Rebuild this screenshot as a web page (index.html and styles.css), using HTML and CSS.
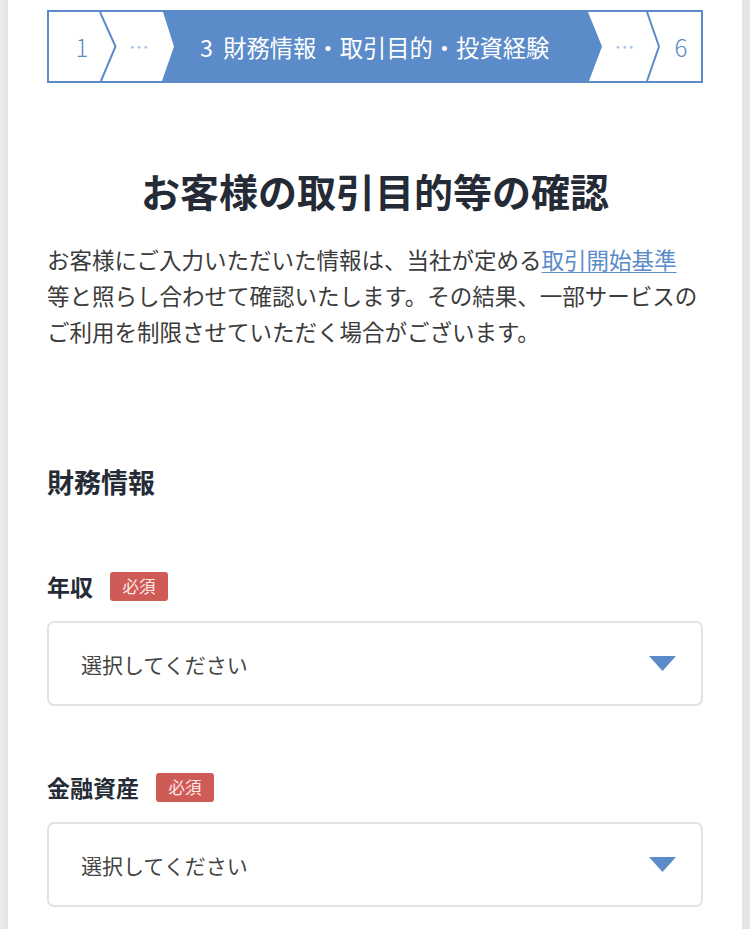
FILE: index.html
```html
<!DOCTYPE html>
<html lang="ja">
<head>
<meta charset="utf-8">
<title>お客様の取引目的等の確認</title>
<link rel="stylesheet" href="styles.css">
</head>
<body>
<div class="page">
  <nav class="stepper" aria-label="進捗">
    <svg class="stepper-bg" viewBox="0 0 652 69" preserveAspectRatio="none" aria-hidden="true">
      <polygon points="114,0 125,34.5 113,69 540,69 553,34.5 539,0" fill="#5b8bc8"/>
      <polyline points="51,0 66.5,34.5 52,69" fill="none" stroke="#5b8bc8" stroke-width="2"/>
      <polyline points="598,0 610,34.5 598,69" fill="none" stroke="#5b8bc8" stroke-width="2"/>
    </svg>
    <ol class="steps">
      <li class="step step-first">1</li>
      <li class="step step-dots">…</li>
      <li class="step step-active">3 財務情報・取引目的・投資経験</li>
      <li class="step step-dots step-dots-right">…</li>
      <li class="step step-last">6</li>
    </ol>
  </nav>

  <h1 class="title">お客様の取引目的等の確認</h1>
  <p class="lead">お客様にご入力いただいた情報は、当社が定める<a href="#" class="lead-link">取引開始基準</a><br>等と照らし合わせて確認いたします。その結果、一部サービスの<br>ご利用を制限させていただく場合がございます。</p>

  <h2 class="section-title">財務情報</h2>

  <div class="field">
    <div class="field-label">年収<span class="badge">必須</span></div>
    <div class="select">
      <span class="select-text">選択してください</span>
      <svg class="caret" viewBox="0 0 27 15" aria-hidden="true"><polygon points="0,0 27,0 13.5,15" fill="#5b8bc8"/></svg>
    </div>
  </div>

  <div class="field">
    <div class="field-label">金融資産<span class="badge">必須</span></div>
    <div class="select">
      <span class="select-text">選択してください</span>
      <svg class="caret" viewBox="0 0 27 15" aria-hidden="true"><polygon points="0,0 27,0 13.5,15" fill="#5b8bc8"/></svg>
    </div>
  </div>
</div>
</body>
</html>
```
FILE: styles.css
```css
html, body {
  margin: 0;
  padding: 0;
}
body {
  background: linear-gradient(to right, #ececf0 0, #e2e2e7 8px, #e2e2e7 742px, #e6e6ea 100%);
  font-family: "Noto Sans CJK JP", "Noto Sans", sans-serif;
  color: #3a3a3a;
}
.page {
  margin: 0 8px;
  background: #ffffff;
  min-height: 929px;
  padding: 10px 39px 40px;
  box-sizing: border-box;
}

/* stepper */
.stepper {
  display: grid;
  width: 656px;
  height: 73px;
  border: 2px solid #5b8bc8;
  box-sizing: border-box;
}
.stepper-bg {
  grid-area: 1 / 1;
  width: 652px;
  height: 69px;
  display: block;
}
.steps {
  grid-area: 1 / 1;
  list-style: none;
  margin: 0;
  padding: 0;
  display: flex;
  align-items: center;
  height: 69px;
}
.step {
  display: flex;
  align-items: center;
  justify-content: center;
  height: 69px;
  box-sizing: border-box;
}
.step-first {
  width: 66px;
  font-size: 24px;
  font-weight: 300;
  color: #5b8bc8;
}
.step-dots {
  width: 48px;
  font-size: 20px;
  color: #a6c0e4;
}
.step-dots-right {
  width: 45px;
}
.step-active {
  width: 439px;
  justify-content: flex-start;
  padding-left: 37px;
  font-size: 23.3px;
  word-spacing: 5px;
  color: #ffffff;
  white-space: nowrap;
}
.step-last {
  flex: 1;
  padding-left: 14px;
  font-size: 24px;
  font-weight: 300;
  color: #5b8bc8;
}

/* heading + lead */
.title {
  margin: 80px 0 23px;
  font-size: 39px;
  line-height: 55px;
  font-weight: 700;
  text-align: center;
  color: #252b36;
}
.lead {
  margin: 0;
  font-size: 22.5px;
  line-height: 36px;
  color: #3b3b3b;
  white-space: nowrap;
}
.lead-link {
  color: #5b8bc8;
  text-decoration: underline;
  text-underline-offset: 3px;
  text-decoration-thickness: 1px;
}

/* section */
.section-title {
  margin: 115px 0 0;
  font-size: 27px;
  line-height: 36px;
  font-weight: 700;
  color: #262c37;
}
.field {
  margin-top: 65px;
}
.section-title + .field {
  margin-top: 70px;
}
.field-label {
  display: flex;
  align-items: center;
  height: 32px;
  margin-bottom: 19px;
  font-size: 23px;
  font-weight: 700;
  color: #262c37;
}
.badge {
  display: inline-flex;
  align-items: center;
  height: 29px;
  margin-left: 17px;
  padding: 0 12.5px;
  background: #cf5b56;
  color: #fde8e6;
  font-size: 16.5px;
  font-weight: 400;
  border-radius: 3px;
}
.select {
  display: flex;
  align-items: center;
  justify-content: space-between;
  height: 85px;
  border: 2px solid #e3e3e3;
  border-radius: 7px;
  padding: 0 25px 0 32px;
  box-sizing: border-box;
  font-size: 21px;
  color: #444444;
}
.caret {
  width: 27px;
  height: 15px;
  display: block;
}
```
